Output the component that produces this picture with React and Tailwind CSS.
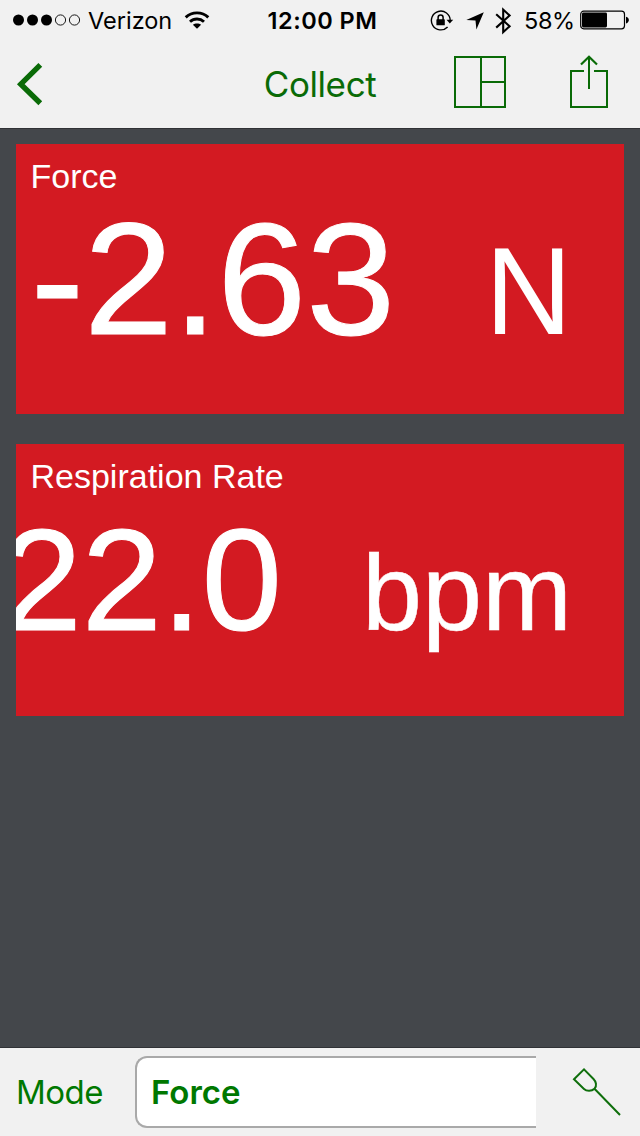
function StatusBar() {
  return (
    <div className="grid h-10 grid-cols-[1fr_auto_1fr] items-center text-black">
      <div className="flex items-center pl-[13px]">
        <svg width="68" height="12" viewBox="0 0 68 12">
          <circle cx="5.5" cy="6" r="5.5" />
          <circle cx="19.5" cy="6" r="5.5" />
          <circle cx="33.5" cy="6" r="5.5" />
          <circle cx="47.5" cy="6" r="5.1" fill="none" stroke="#000" strokeWidth="0.9" />
          <circle cx="61.5" cy="6" r="5.1" fill="none" stroke="#000" strokeWidth="0.9" />
        </svg>
        <span className="ml-[7px] w-[96px] pt-px text-[23.5px] leading-[38px]">Verizon</span>
        <svg width="26" height="18" viewBox="0 0 26 18" fill="none" stroke="#000" strokeWidth="2.9">
          <path d="M1.7 6.4 C8 .3 18 .3 24.3 6.4" />
          <path d="M6 10.7 C10 7 16 7 20 10.7" />
          <path d="M13 17.8 L8.9 13.8 C11 11.9 15 11.9 17.1 13.8 Z" fill="#000" stroke="none" />
        </svg>
      </div>
      <div className="pl-[5px] pt-[2px] text-[23.5px] font-semibold leading-[38px] tracking-[0.5px]">12:00 PM</div>
      <div className="flex items-center justify-end pr-[11px]">
        <svg width="24" height="22" viewBox="0 0 24 22" fill="none" stroke="#000" strokeWidth="1.4" className="mt-px">
          <path d="M20.2 10.5 A9.4 9.4 0 1 0 17.6 17" />
          <path d="M16.5 9.8 H23.2 L19.8 13.6 Z" fill="#000" stroke="none" />
          <rect x="6.4" y="9.3" width="8.4" height="6" rx="0.6" fill="#000" stroke="none" />
          <path d="M8.1 10 V7.5 a2.5 2.5 0 0 1 5 0 V10" strokeWidth="1.5" />
        </svg>
        <svg width="18" height="18" viewBox="0 0 18 18" className="ml-[12px] mt-0.5">
          <path d="M17.8 .2 L10.4 17.6 L9.5 8.6 L.3 8 Z" />
        </svg>
        <svg width="17" height="28" viewBox="0 0 17 28" fill="none" stroke="#000" strokeWidth="2.1" className="ml-[11px] mt-px">
          <path d="M1.2 7.2 L14.6 19.3 L8.2 25.2 V2.6 L14.6 8.5 L1.2 20.6" />
        </svg>
        <span className="ml-[12px] w-[56px] whitespace-nowrap pt-[2px] text-[23.5px] leading-[38px] tracking-[-0.4px]">58%</span>
        <svg width="49" height="20" viewBox="0 0 49 20">
          <rect x="0.7" y="1.2" width="43.8" height="17.6" rx="3" fill="none" stroke="#000" strokeWidth="1.2" />
          <rect x="2" y="2.6" width="25" height="14.8" rx="1.4" />
          <path d="M46 6.7 C49.8 7.5 49.8 12.7 46 13.5 Z" />
        </svg>
      </div>
    </div>
  );
}

function NavBar() {
  return (
    <div className="grid h-[88px] grid-cols-[1fr_auto_1fr] items-center text-[#0a6b07]">
      <svg width="28" height="44" viewBox="0 0 28 44" fill="none" stroke="currentColor" strokeWidth="5.4" className="ml-4">
        <path d="M24.3 2.9 L4.8 22.2 L24.3 41.2" />
      </svg>
      <h1 className="text-[35px] leading-[88px] tracking-[-0.4px]">Collect</h1>
      <div className="flex justify-end pb-1 pr-8">
        <svg width="52" height="54" viewBox="0 0 52 54" fill="none" stroke="currentColor" strokeWidth="2">
          <path d="M1 2 H51 V52 H1 Z M27 2 V52 M27 27 H51" />
        </svg>
        <svg width="38" height="54" viewBox="0 0 38 54" fill="none" stroke="currentColor" strokeWidth="2" className="ml-16">
          <path d="M14 16 H1 V52 H37 V16 H24 M19 34 V2" />
          <path d="M11 9.5 L19 1.7 L27 9.5" strokeWidth="2.2" />
        </svg>
      </div>
    </div>
  );
}

function ForceCard() {
  return (
    <section className="flex h-[270px] flex-col overflow-hidden bg-[#d31a22] pt-[15px] text-white">
      <h2 className="pl-[14.5px] text-[34px] leading-[34px]">Force</h2>
      <div className="mt-[26px] flex items-baseline justify-end pr-[52px] leading-none">
        <span className="mr-[90px] text-[160px] leading-[120px] [-webkit-text-stroke:1px_white]">-2.63</span>
        <span className="origin-[0_102px] scale-y-[1.04] text-[120px] leading-[120px]">N</span>
      </div>
    </section>
  );
}

function RespirationCard() {
  return (
    <section className="flex h-[272px] flex-col overflow-hidden bg-[#d31a22] pt-[15px] text-white">
      <h2 className="pl-[14.5px] text-[34px] leading-[34px]">Respiration Rate</h2>
      <div className="mt-[28px] flex items-baseline justify-end pr-[52px] leading-none">
        <span className="mr-[80px] text-[144px] leading-[120px] [-webkit-text-stroke:1px_white]">22.0</span>
        <span className="text-[108px] leading-[108px] [-webkit-text-stroke:0.5px_white]">bpm</span>
      </div>
    </section>
  );
}

function ModeBar() {
  return (
    <footer className="flex h-[89px] items-center border-t border-[#303236] bg-[#f1f1f1] text-[#007800]">
      <span className="w-[135px] pl-4 text-[33px] leading-[88px] tracking-[-0.5px]">Mode</span>
      <div className="flex h-[72px] w-[401px] items-center rounded-l-[12px] border-2 border-r-0 border-[#a9a9a9] bg-white pl-[14px]">
        <span className="text-[33px] font-semibold leading-[68px]">Force</span>
      </div>
      <svg width="50" height="50" viewBox="0 0 50 50" fill="none" stroke="#0f6f0c" strokeWidth="2" className="ml-9">
        <path d="M2 12.2 L12 2.4 L21.5 12 C24 14.5 25.2 19 22.5 21.7 C19.5 24.6 14.5 24.4 12 22 Z M22.5 21.7 L48 48" />
      </svg>
    </footer>
  );
}

export default function App() {
  return (
    <div className="flex h-[1136px] w-[640px] flex-col overflow-hidden bg-[#44474b] font-['Inter',sans-serif]">
      <header className="h-[129px] border-b border-[#303236] bg-[#f1f1f1]">
        <StatusBar />
        <NavBar />
      </header>
      <main className="flex flex-1 flex-col gap-[30px] px-4 pt-[15px] font-['Liberation_Sans',sans-serif]">
        <ForceCard />
        <RespirationCard />
      </main>
      <ModeBar />
    </div>
  );
}
